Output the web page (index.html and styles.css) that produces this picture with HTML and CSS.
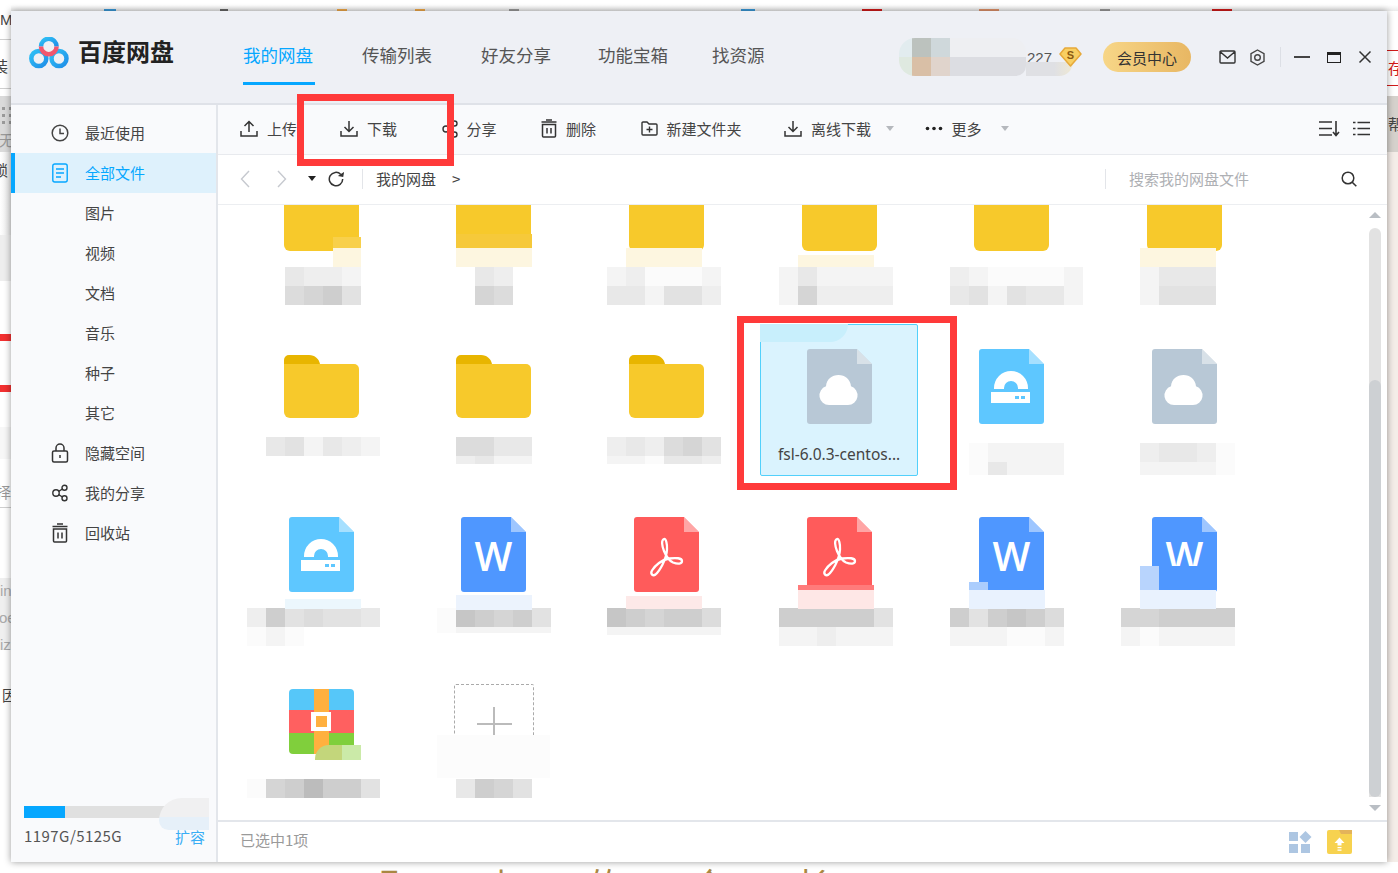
FILE: index.html
```html
<!DOCTYPE html>
<html lang="zh-CN">
<head>
    <meta charset="UTF-8">
    <title>百度网盘</title>
    <link rel="stylesheet" href="styles.css">
</head>
<body>
    <svg class="defs" width="0" height="0">
        <symbol id="file-shape" viewBox="0 0 65 75">
            <path d="M3 0H50L65 15V72a3 3 0 0 1-3 3H3a3 3 0 0 1-3-3V3a3 3 0 0 1 3-3z" fill="currentColor"/>
            <path d="M50 0L65 15H50z" fill="#fff" opacity=".45"/>
        </symbol>
        <symbol id="folder" viewBox="0 0 75 63">
            <path d="M0 12V5a5 5 0 0 1 5-5h20c6 0 10 4 11 9v6H0z" fill="#e8b500"/>
            <path d="M0 9h70a5 5 0 0 1 5 5v43a6 6 0 0 1-6 6H6a6 6 0 0 1-6-6z" fill="#f7c92b"/>
        </symbol>
        <symbol id="cloud-file" viewBox="0 0 65 75">
            <use href="#file-shape" color="#b8c8d6"/>
            <path d="M22 56a9.6 9.6 0 0 1-3-18.7C19.5 30 25 26 31.500 26s12 4.500 12.500 11.300A9.600 9.600 0 0 1 41 56z" fill="#fff"/>
        </symbol>
        <symbol id="disc-file" viewBox="0 0 65 75">
            <use href="#file-shape" color="#5ec7ff"/>
            <path d="M15 40v-1a17 17 0 0 1 34 0v1H39v-1a7 7 0 0 0-14 0v1z" fill="#fff"/>
            <path d="M12 43h39v11H12z" fill="#fff"/>
            <path d="M36 47h4v3h-4zM42 47h4v3h-4z" fill="#5ec7ff"/>
        </symbol>
        <symbol id="word-file" viewBox="0 0 65 75">
            <use href="#file-shape" color="#4f97ff"/>
            <text x="32.500" y="54" text-anchor="middle" class="word-w">W</text>
        </symbol>
        <symbol id="pdf-file" viewBox="0 0 65 75">
            <use href="#file-shape" color="#ff5b5b"/>
            <path d="M30 22c-3 1-2 7 0 12 2 5 6 10 9 11.500 5 2 9 1.500 9-1.500 0-3-6-3.500-13-2.500-7 1-14 7-17 12-2 3.500 1 6 3.500 4 4-3.500 11-15 11.500-25 .3-5.500-1-11-3-10.500z" fill="none" stroke="#fff" stroke-width="2.300"/>
        </symbol>
    </svg>

    <!-- whatever is open behind the window -->
    <div class="desktop">
        <div class="edge edge-top">
            <i class="tick tk1"></i><i class="tick tk2"></i><i class="tick tk3"></i><i class="tick tk4"></i><i class="tick tk5"></i>
            <i class="tick tk6"></i><i class="tick tk7"></i><i class="tick tk8"></i><i class="tick tk9"></i><i class="tick tk10"></i>
        </div>
        <div class="edge edge-left">
            <i class="lb lb1"></i><i class="lb lb2"></i><i class="lb lb3"></i><i class="lb lb4"></i><i class="lb lb5"></i>
            <i class="lb lb6"></i><i class="lb lb7"></i><i class="lb lb8"></i><i class="lb lb9"></i><i class="lb lb10"></i>
            <span class="scrap s-m">M</span><span class="scrap s-zhuang">装</span><span class="scrap s-wu">无</span>
            <span class="scrap s-suo">锁</span><span class="scrap s-ze">择</span><span class="scrap s-in">in</span>
            <span class="scrap s-oe">oe</span><span class="scrap s-iz">iz</span><span class="scrap s-yin">因</span>
        </div>
        <div class="edge edge-right">
            <i class="rb rb1"></i><i class="rb rb2"></i><i class="rb rb3"></i>
            <span class="scrap s-cun">存</span><span class="scrap s-bang">帮</span>
        </div>
        <div class="edge-bottom">
            <span>取</span><span>小</span><span>的</span><span>合</span><span>长</span>
        </div>
    </div>

    <div class="window">
        <header class="topbar">
            <svg class="logo" width="40" height="32" viewBox="0 0 40 32">
                <defs>
                    <linearGradient id="logo-blue" x1="0" y1="0" x2="1" y2="1">
                        <stop offset="0" stop-color="#2fc0f5"/>
                        <stop offset="1" stop-color="#1f8fe8"/>
                    </linearGradient>
                </defs>
                <circle cx="9.800" cy="21.500" r="7.500" fill="none" stroke="url(#logo-blue)" stroke-width="4.500"/>
                <circle cx="30" cy="21.500" r="7.500" fill="none" stroke="url(#logo-blue)" stroke-width="4.500"/>
                <path d="M12 9.500a7.800 7.800 0 0 1 15.600 0" fill="none" stroke="url(#logo-blue)" stroke-width="4.500"/>
                <path d="M12 9.500c0 4 3.500 7.800 7.800 7.800s7.800-3.800 7.800-7.800" fill="none" stroke="#f2566e" stroke-width="4.500"/>
            </svg>
            <div class="brand">百度网盘</div>
            <nav class="tabs">
                <a class="tab active">我的网盘</a>
                <a class="tab">传输列表</a>
                <a class="tab">好友分享</a>
                <a class="tab">功能宝箱</a>
                <a class="tab">找资源</a>
            </nav>
            <div class="user">
                <div class="avatar-blur">
                    <i class="ab1"></i><i class="ab2"></i><i class="ab3"></i><i class="ab4"></i><i class="ab4"></i><i class="ab4"></i><i class="ab4"></i>
                    <i class="ab5"></i><i class="ab6"></i><i class="ab7"></i><i class="ab8"></i><i class="ab8"></i><i class="ab8"></i><i class="ab8"></i>
                </div>
                <span class="user-num">227</span>
                <i class="avatar-tail"></i>
                <svg width="23" height="20" viewBox="0 0 23 20">
                    <path d="M6 1h11l5 6-10.500 12L1 7z" fill="#f8cf62" stroke="#e6a93a" stroke-width="1.500" stroke-linejoin="round"/>
                    <text x="11.500" y="12" text-anchor="middle" class="vip-s">S</text>
                </svg>
            </div>
            <a class="vip-btn">会员中心</a>
            <svg class="win-icon mail" width="17" height="14" viewBox="0 0 17 14">
                <path d="M2 1h13a1 1 0 0 1 1 1v10a1 1 0 0 1-1 1H2a1 1 0 0 1-1-1V2a1 1 0 0 1 1-1zM1.500 2l7 6 7-6" fill="none" stroke="#333" stroke-width="1.400"/>
            </svg>
            <svg class="win-icon gear" width="17" height="17" viewBox="0 0 17 17">
                <path d="M8.500 1l6.500 3.700v7.600L8.500 16 2 12.300V4.700z" fill="none" stroke="#444" stroke-width="1.400"/>
                <circle cx="8.500" cy="8.500" r="2.800" fill="none" stroke="#444" stroke-width="1.400"/>
            </svg>
            <i class="win-sep"></i>
            <i class="win-min"></i>
            <i class="win-max"></i>
            <svg class="win-close" width="14" height="14" viewBox="0 0 14 14">
                <path d="M1.500 1.500l11 11M12.500 1.500l-11 11" stroke="#333" stroke-width="1.500"/>
            </svg>
        </header>

        <div class="body">
            <aside class="sidebar">
                <ul class="nav">
                    <li class="nav-item">
                        <svg class="nav-icon" width="18" height="18" viewBox="0 0 18 18">
                            <circle cx="9" cy="9" r="7.800" fill="none" stroke="#444" stroke-width="1.500"/>
                            <path d="M9 4.500V9.500H13" fill="none" stroke="#444" stroke-width="1.500"/>
                        </svg>
                        最近使用
                    </li>
                    <li class="nav-item active">
                        <svg class="nav-icon" width="18" height="20" viewBox="0 0 18 20">
                            <rect x="1.800" y="1" width="14.400" height="18" rx="2" fill="none" stroke="#06a7ff" stroke-width="1.400"/>
                            <path d="M5 6h8M5 10h8M5 14h5" stroke="#06a7ff" stroke-width="1.300"/>
                        </svg>
                        全部文件
                    </li>
                    <li class="nav-item sub">图片</li>
                    <li class="nav-item sub">视频</li>
                    <li class="nav-item sub">文档</li>
                    <li class="nav-item sub">音乐</li>
                    <li class="nav-item sub">种子</li>
                    <li class="nav-item sub">其它</li>
                    <li class="nav-item">
                        <svg class="nav-icon" width="18" height="20" viewBox="0 0 18 20">
                            <rect x="1.500" y="8" width="15" height="11" rx="1.500" fill="none" stroke="#333" stroke-width="1.500"/>
                            <path d="M5 8V5a4 4 0 0 1 8 0v3" fill="none" stroke="#333" stroke-width="1.500"/>
                            <path d="M9 12v3" stroke="#333" stroke-width="1.500"/>
                        </svg>
                        隐藏空间
                    </li>
                    <li class="nav-item">
                        <svg class="nav-icon" width="18" height="18" viewBox="0 0 18 18">
                            <circle cx="5" cy="9" r="3.200" fill="none" stroke="#333" stroke-width="1.400"/>
                            <circle cx="13.500" cy="3.700" r="2.500" fill="none" stroke="#333" stroke-width="1.400"/>
                            <circle cx="13.500" cy="14.300" r="2.500" fill="none" stroke="#333" stroke-width="1.400"/>
                            <path d="M7.700 7.300l3.700-2.300M7.700 10.700l3.700 2.300" stroke="#333" stroke-width="1.400"/>
                        </svg>
                        我的分享
                    </li>
                    <li class="nav-item">
                        <svg class="nav-icon" width="18" height="20" viewBox="0 0 18 20">
                            <path d="M2.500 6h13v12a1 1 0 0 1-1 1h-11a1 1 0 0 1-1-1zM1.500 3.500h15M6 1h6" fill="none" stroke="#333" stroke-width="1.500"/>
                            <path d="M7 9.500v6M11 9.500v6" stroke="#333" stroke-width="1.500"/>
                        </svg>
                        回收站
                    </li>
                </ul>
                <div class="quota">
                    <div class="quota-bar"><i class="quota-used"></i></div>
                    <div class="quota-text"><span class="quota-num">1197G/5125G</span><a class="quota-more">扩容</a></div>
                </div>
                <i class="quota-blur"></i>
            </aside>

            <main class="content">
                <div class="toolbar">
                    <a class="tool upload">
                        <svg width="18" height="17" viewBox="0 0 18 17"><path d="M1 11v5h16v-5M9 12V1.500M4.500 6L9 1.500 13.500 6" fill="none" stroke="#333" stroke-width="1.500"/></svg>
                        上传
                    </a>
                    <a class="tool">
                        <svg width="18" height="17" viewBox="0 0 18 17"><path d="M1 11v5h16v-5M9 1v10.500M4.500 7L9 11.500 13.500 7" fill="none" stroke="#333" stroke-width="1.500"/></svg>
                        下载
                    </a>
                    <a class="tool">
                        <svg width="16" height="18" viewBox="0 0 16 18"><circle cx="4" cy="9" r="3" fill="none" stroke="#333" stroke-width="1.400"/><circle cx="12.500" cy="3.500" r="2.500" fill="none" stroke="#333" stroke-width="1.400"/><circle cx="12.500" cy="14.500" r="2.500" fill="none" stroke="#333" stroke-width="1.400"/><path d="M6.500 7.300l4-2.500M6.500 10.700l4 2.500" stroke="#333" stroke-width="1.400"/></svg>
                        分享
                    </a>
                    <a class="tool">
                        <svg width="16" height="19" viewBox="0 0 16 19"><path d="M1.500 5.500h13V17a1 1 0 0 1-1 1h-11a1 1 0 0 1-1-1zM.5 3h15M5 1h6" fill="none" stroke="#333" stroke-width="1.500"/><path d="M6 9v5.500M10 9v5.500" stroke="#333" stroke-width="1.500"/></svg>
                        删除
                    </a>
                    <a class="tool new-folder">
                        <svg width="17" height="15" viewBox="0 0 17 15"><path d="M1 3V2a1 1 0 0 1 1-1h4l2 2h7a1 1 0 0 1 1 1v9a1 1 0 0 1-1 1H2a1 1 0 0 1-1-1z" fill="none" stroke="#333" stroke-width="1.400"/><path d="M8.500 5.500v6M5.500 8.500h6" stroke="#333" stroke-width="1.400"/></svg>
                        新建文件夹
                    </a>
                    <a class="tool has-caret">
                        <svg width="18" height="17" viewBox="0 0 18 17"><path d="M1 11v5h16v-5M9 1v10.500M4.500 7L9 11.500 13.500 7" fill="none" stroke="#333" stroke-width="1.500"/></svg>
                        离线下载
                        <i class="caret"></i>
                    </a>
                    <a class="tool more">
                        <svg width="18" height="17" viewBox="0 0 18 17"><circle cx="2.500" cy="8.500" r="1.800" fill="#222"/><circle cx="9" cy="8.500" r="1.800" fill="#222"/><circle cx="15.500" cy="8.500" r="1.800" fill="#222"/></svg>
                        更多
                        <i class="caret"></i>
                    </a>
                    <div class="view-tools">
                        <svg width="21" height="17" viewBox="0 0 21 17"><path d="M0 2h13M0 8.500h13M0 15h13" stroke="#333" stroke-width="1.400"/><path d="M17 1v14M14 12l3 3.500 3-3.500" fill="none" stroke="#333" stroke-width="1.600"/></svg>
                        <svg width="17" height="15" viewBox="0 0 17 15"><path d="M4.500 1.500H17M4.500 7.500H17M4.500 13.500H17" stroke="#333" stroke-width="1.300"/><path d="M0 1.500h2.500M0 7.500h2.500M0 13.500h2.500" stroke="#333" stroke-width="1.300"/></svg>
                    </div>
                </div>

                <div class="pathbar">
                    <svg class="back" width="10" height="18" viewBox="0 0 10 18"><path d="M9 1L1.500 9 9 17" fill="none" stroke="#c6c9cf" stroke-width="1.400"/></svg>
                    <svg class="forward" width="10" height="18" viewBox="0 0 10 18"><path d="M1 1l7.500 8L1 17" fill="none" stroke="#c6c9cf" stroke-width="1.400"/></svg>
                    <i class="drop"></i>
                    <svg class="refresh" width="16" height="16" viewBox="0 0 16 16"><path d="M12.800 3.400A6.700 6.700 0 1 0 14.700 8" fill="none" stroke="#333" stroke-width="1.500"/><path d="M10.200 5.500h5.500V.5z" fill="#333" transform="rotate(10 13 3)"/></svg>
                    <i class="path-sep"></i>
                    <span class="crumb">我的网盘</span>
                    <span class="crumb-arrow">&gt;</span>
                    <div class="search">
                        <span>搜索我的网盘文件</span>
                        <svg width="16" height="16" viewBox="0 0 16 16"><circle cx="7" cy="7" r="5.800" fill="none" stroke="#333" stroke-width="1.500"/><path d="M11 11l4.300 4.300" stroke="#333" stroke-width="1.600"/></svg>
                    </div>
                </div>

                <div class="listing">
                    <div class="files">
                        <!-- row 1 is scrolled under the path bar -->
                        <div class="tile">
                            <div class="thumb"><svg width="75" height="63"><use href="#folder"/></svg></div>
                            <div class="name w4 r1 x43"><i class="s3"></i><i class="s2"></i><i class="s2"></i><i class="s1"></i><i class="s5"></i><i class="s6"></i><i class="s7"></i><i class="s4"></i></div>
                            <i class="tint t1"></i>
                        </div>
                        <div class="tile">
                            <div class="thumb"><svg width="75" height="63"><use href="#folder"/></svg></div>
                            <div class="name w2 r1 x60"><i class="s3"></i><i class="s2"></i><i class="s6"></i><i class="s5"></i></div>
                            <i class="tint t2"></i>
                        </div>
                        <div class="tile">
                            <div class="thumb"><svg width="75" height="63"><use href="#folder"/></svg></div>
                            <div class="name w6 r1 x20"><i class="s1"></i><i class="s2"></i><i class="s0"></i><i class="s0"></i><i class="s0"></i><i class="s1"></i><i class="s3"></i><i class="s3"></i><i class="s1"></i><i class="s4"></i><i class="s4"></i><i class="s2"></i></div>
                            <i class="tint t3"></i>
                        </div>
                        <div class="tile">
                            <div class="thumb"><svg width="75" height="63"><use href="#folder"/></svg></div>
                            <div class="name w6 r1 x19"><i class="s1"></i><i class="s3"></i><i class="s1"></i><i class="s1"></i><i class="s1"></i><i class="s1"></i><i class="s1"></i><i class="s6"></i><i class="s2"></i><i class="s2"></i><i class="s2"></i><i class="s2"></i></div>
                            <i class="tint t4"></i>
                        </div>
                        <div class="tile">
                            <div class="thumb"><svg width="75" height="63"><use href="#folder"/></svg></div>
                            <div class="name w7 r1 x17"><i class="s2"></i><i class="s1"></i><i class="s0"></i><i class="s0"></i><i class="s0"></i><i class="s0"></i><i class="s1"></i><i class="s3"></i><i class="s4"></i><i class="s1"></i><i class="s4"></i><i class="s3"></i><i class="s3"></i><i class="s1"></i></div>
                        </div>
                        <div class="tile">
                            <div class="thumb"><svg width="75" height="63"><use href="#folder"/></svg></div>
                            <div class="name w4 r1 x35"><i class="s1"></i><i class="s3"></i><i class="s3"></i><i class="s3"></i><i class="s1"></i><i class="s4"></i><i class="s4"></i><i class="s4"></i></div>
                            <i class="tint t5"></i>
                        </div>

                        <div class="tile">
                            <div class="thumb"><svg width="75" height="63"><use href="#folder"/></svg></div>
                            <div class="name w6 r2 x24"><i class="s3"></i><i class="s4"></i><i class="s1"></i><i class="s3"></i><i class="s2"></i><i class="s1"></i></div>
                        </div>
                        <div class="tile">
                            <div class="thumb"><svg width="75" height="63"><use href="#folder"/></svg></div>
                            <div class="name w4 r2 x41 tail8"><i class="s5"></i><i class="s5"></i><i class="s3"></i><i class="s3"></i><i class="s2"></i><i class="s3"></i><i class="s1"></i><i class="s1"></i></div>
                        </div>
                        <div class="tile">
                            <div class="thumb"><svg width="75" height="63"><use href="#folder"/></svg></div>
                            <div class="name w6 r2 x20 tail8"><i class="s2"></i><i class="s3"></i><i class="s2"></i><i class="s5"></i><i class="s6"></i><i class="s4"></i><i class="s1"></i><i class="s1"></i><i class="s0"></i><i class="s3"></i><i class="s3"></i><i class="s2"></i></div>
                        </div>
                        <div class="tile selected">
                            <i class="select-tint"></i>
                            <div class="thumb"><svg width="65" height="75"><use href="#cloud-file"/></svg></div>
                            <div class="file-name">fsl-6.0.3-centos...</div>
                        </div>
                        <div class="tile">
                            <div class="thumb"><svg width="65" height="75"><use href="#disc-file"/></svg></div>
                            <div class="name w5 r2b x36 tail13"><i class="s0"></i><i class="s1"></i><i class="s1"></i><i class="s1"></i><i class="s1"></i><i class="s0"></i><i class="s3"></i><i class="s1"></i><i class="s1"></i><i class="s1"></i></div>
                        </div>
                        <div class="tile">
                            <div class="thumb"><svg width="65" height="75"><use href="#cloud-file"/></svg></div>
                            <div class="name w5 r2b x35 tail13"><i class="s2"></i><i class="s3"></i><i class="s3"></i><i class="s2"></i><i class="s0"></i><i class="s1"></i><i class="s1"></i><i class="s1"></i><i class="s1"></i><i class="s0"></i></div>
                        </div>

                        <div class="tile">
                            <div class="thumb"><svg width="65" height="75"><use href="#disc-file"/></svg></div>
                            <div class="name w7 r3 x5"><i class="s2"></i><i class="s7"></i><i class="s4"></i><i class="s5"></i><i class="s4"></i><i class="s4"></i><i class="s3"></i><i class="s0"></i><i class="s1"></i><i class="s0"></i><i class="s9w"></i><i class="s9w"></i><i class="s9w"></i><i class="s9w"></i></div>
                            <i class="tint t6"></i>
                        </div>
                        <div class="tile">
                            <div class="thumb"><svg width="65" height="75"><use href="#word-file"/></svg></div>
                            <div class="name w6 r3 x22 tail6"><i class="s0"></i><i class="s8"></i><i class="s7"></i><i class="s6"></i><i class="s7"></i><i class="s4"></i><i class="s0"></i><i class="s1"></i><i class="s1"></i><i class="s1"></i><i class="s1"></i><i class="s1"></i></div>
                            <i class="tint t7"></i>
                        </div>
                        <div class="tile">
                            <div class="thumb"><svg width="65" height="75"><use href="#pdf-file"/></svg></div>
                            <div class="name w6 r3 x20 tail8"><i class="s8"></i><i class="s7"></i><i class="s6"></i><i class="s7"></i><i class="s7"></i><i class="s5"></i><i class="s1"></i><i class="s1"></i><i class="s1"></i><i class="s1"></i><i class="s1"></i><i class="s1"></i></div>
                            <i class="tint t8"></i>
                        </div>
                        <div class="tile">
                            <div class="thumb"><svg width="65" height="75"><use href="#pdf-file"/></svg></div>
                            <div class="name w6 r3 x19"><i class="s7"></i><i class="s7"></i><i class="s7"></i><i class="s7"></i><i class="s7"></i><i class="s4"></i><i class="s1"></i><i class="s1"></i><i class="s2"></i><i class="s1"></i><i class="s1"></i><i class="s1"></i></div>
                            <i class="tint t9"></i>
                        </div>
                        <div class="tile">
                            <div class="thumb"><svg width="65" height="75"><use href="#word-file"/></svg></div>
                            <div class="name w6 r3 x17"><i class="s7"></i><i class="s4"></i><i class="s7"></i><i class="s8"></i><i class="s7"></i><i class="s5"></i><i class="s1"></i><i class="s1"></i><i class="s1"></i><i class="s0"></i><i class="s0"></i><i class="s1"></i></div>
                            <i class="tint t10"></i>
                        </div>
                        <div class="tile">
                            <div class="thumb"><svg width="65" height="75"><use href="#word-file"/></svg></div>
                            <div class="name w6 r3 x16"><i class="s6"></i><i class="s6"></i><i class="s7"></i><i class="s7"></i><i class="s7"></i><i class="s7"></i><i class="s1"></i><i class="s0"></i><i class="s1"></i><i class="s1"></i><i class="s1"></i><i class="s1"></i></div>
                            <i class="tint t11"></i>
                        </div>

                        <div class="tile">
                            <div class="thumb">
                                <svg width="65" height="65" viewBox="0 0 65 65">
                                    <clipPath id="zip-round"><rect width="65" height="65" rx="4"/></clipPath>
                                    <g clip-path="url(#zip-round)">
                                        <rect width="65" height="21" fill="#56c7f9"/>
                                        <rect y="21" width="65" height="23" fill="#ff6060"/>
                                        <rect y="44" width="65" height="21" fill="#80cf3c"/>
                                        <rect x="25" width="15" height="65" fill="#ffb03f"/>
                                        <rect x="22" y="23" width="20" height="19" fill="#fff"/>
                                        <rect x="27" y="27" width="11" height="11" fill="#ffb03f"/>
                                    </g>
                                </svg>
                            </div>
                            <div class="name w7 r4 x5"><i class="s0"></i><i class="s6"></i><i class="s7"></i><i class="s9"></i><i class="s7"></i><i class="s7"></i><i class="s4"></i></div>
                            <i class="tint t12"></i>
                        </div>
                        <div class="tile">
                            <div class="thumb">
                                <div class="add-box"><i class="plus-h"></i><i class="plus-v"></i></div>
                            </div>
                            <div class="name w4 r4 x41"><i class="s3"></i><i class="s7"></i><i class="s6"></i><i class="s4"></i></div>
                            <i class="tint t13"></i>
                        </div>
                    </div>
                    <div class="scroller">
                        <i class="arrow-up"></i>
                        <div class="track"><i class="thumb-bar"></i></div>
                        <i class="arrow-down"></i>
                    </div>
                </div>

                <footer class="status">
                    <span class="status-text">已选中1项</span>
                    <div class="status-icons">
                        <svg width="23" height="22" viewBox="0 0 23 22"><path d="M0 1h9v9H0zM0 13h9v9H0zM12 13h9v9h-9z" fill="#adc6e2"/><path d="M16.500 0l6 6-6 6-6-6z" fill="#adc6e2"/></svg>
                        <svg width="25" height="24" viewBox="0 0 25 24">
                            <rect width="25" height="24" rx="2" fill="#f7d24f"/>
                            <path d="M12 0h13v4H14z" fill="#e3b35a"/>
                            <path d="M12.500 7.500l5 5.500h-3v2.500h-4V13h-3zM10.500 17h4v1.200h-4zM10.500 19.500h4v1.200h-4z" fill="#fff"/>
                        </svg>
                    </div>
                </footer>
            </main>
        </div>
    </div>

    <!-- red marks drawn on top of the screenshot -->
    <div class="mark mark-download"></div>
    <div class="mark mark-file"></div>
</body>
</html>
```

FILE: styles.css
```css
* {
    box-sizing: border-box;
}

body {
    margin: 0;
    width: 1398px;
    height: 873px;
    overflow: hidden;
    position: relative;
    background-color: #fff;
    font-family: "Noto Sans CJK SC", "Noto Sans", sans-serif;
    font-size: 15px;
    color: #444;
}

i {
    display: block;
    font-style: normal;
}

.defs {
    position: absolute;
}

.word-w {
    font-family: "Open Sans", sans-serif;
    font-weight: 600;
    font-size: 40px;
    fill: #fff;
}

.vip-s {
    font-family: "Liberation Sans", sans-serif;
    font-weight: 700;
    font-size: 11px;
    fill: #8a5a12;
}

/* behind the window */
.desktop {
    position: absolute;
    inset: 0;
}

.edge {
    position: absolute;
    overflow: hidden;
}

.edge-top {
    left: 0;
    top: 0;
    width: 1398px;
    height: 11px;
    background: linear-gradient(#fff 0 5px, #ebebeb);
}

.tick {
    position: absolute;
    top: 9px;
    height: 2px;
    width: 20px;
}

.tk1 { left: 104px; width: 12px; background: #3a9ad9; }
.tk2 { left: 220px; width: 8px; background: #666; }
.tk3 { left: 337px; width: 10px; background: #f0a848; }
.tk4 { left: 415px; width: 10px; background: #f0a848; }
.tk5 { left: 509px; width: 10px; background: #999; }
.tk6 { left: 741px; width: 14px; background: #3a9ad9; }
.tk7 { left: 862px; background: #d11a1a; }
.tk8 { left: 979px; background: #e0926a; }
.tk9 { left: 1100px; width: 10px; background: #999; }
.tk10 { left: 1212px; background: #d11a1a; }

.edge-left {
    left: 0;
    top: 0;
    width: 11px;
    height: 873px;
    background-color: #fff;
}

.lb {
    position: absolute;
    left: 0;
    width: 11px;
    height: 1px;
    background-color: #cfcfcf;
}

.lb1 { top: 39px; }
.lb2 { top: 88px; }
.lb3 {
    top: 96px;
    height: 56px;
    background:
        radial-gradient(circle, #9a9a9a 0 2px, transparent 2px) 0 9px / 7px 7px repeat-x,
        radial-gradient(circle, #9a9a9a 0 2px, transparent 2px) 0 16px / 7px 7px repeat-x,
        radial-gradient(circle, #9a9a9a 0 2px, transparent 2px) 0 23px / 7px 7px repeat-x,
        #dadada;
}
.lb4 { top: 152px; height: 84px; background: linear-gradient(90deg, #fff, #e4e4e4); }
.lb5 { top: 235px; height: 46px; background-color: #eeeeee; }
.lb6 { top: 334px; height: 7px; background-color: #f23030; }
.lb7 { top: 385px; height: 7px; background-color: #f23030; }
.lb8 { top: 427px; height: 32px; background-color: #f7f7f7; }
.lb9 { top: 507px; }
.lb10 { top: 578px; height: 72px; background-color: #efefef; }

.scrap {
    position: absolute;
    font-size: 15px;
    line-height: 20px;
    color: #444;
}

.s-m { left: 0; top: 10px; font-family: "Liberation Sans", sans-serif; }
.s-zhuang { left: -7px; top: 56px; }
.s-wu { left: -1px; top: 130px; color: #999; }
.s-suo { left: -7px; top: 160px; }
.s-ze { left: -4px; top: 482px; color: #999; }
.s-in { left: 0; top: 581px; color: #aaa; font-family: "Liberation Sans", sans-serif; }
.s-oe { left: -1px; top: 608px; color: #aaa; font-family: "Liberation Sans", sans-serif; }
.s-iz { left: 0; top: 635px; color: #aaa; font-family: "Liberation Sans", sans-serif; }
.s-yin { left: 2px; top: 685px; }

.edge-right {
    left: 1387px;
    top: 11px;
    width: 11px;
    height: 851px;
    background: linear-gradient(#fff 0 85px, #f4ede8 85px);
}

.rb {
    position: absolute;
    left: 0;
    width: 11px;
    height: 1px;
    background-color: #d11a1a;
}

.rb1 { top: 39px; }
.rb2 { top: 74px; }
.rb3 { top: 85px; height: 56px; background-color: #d5d1cc; }

.s-cun { left: 1px; top: 47px; color: #d11a1a; }
.s-bang { left: 1px; top: 103px; }

.edge-bottom {
    position: absolute;
    left: 380px;
    top: 862px;
    display: flex;
    gap: 70px;
    font-size: 34px;
    line-height: 40px;
    color: #a98742;
    padding-top: 2px;
}

/* window */
.window {
    position: absolute;
    left: 11px;
    top: 11px;
    width: 1376px;
    height: 851px;
    display: flex;
    flex-direction: column;
    background-color: #fff;
    box-shadow: 0 0 7px rgba(0, 0, 0, 0.4);
}

.topbar {
    height: 94px;
    flex: none;
    display: flex;
    align-items: center;
    padding: 0 15px 0 18px;
    background-color: #eef0f5;
    border-bottom: 2px solid #dfe2e8;
}

.logo {
    flex: none;
    margin-top: -8px;
}

.brand {
    margin-left: 9px;
    margin-top: -12px;
    font-size: 24px;
    font-weight: 700;
    line-height: 30px;
    color: #222;
}

.tabs {
    display: flex;
    gap: 49px;
    margin-left: 69px;
    align-self: flex-start;
}

.tab {
    height: 74px;
    padding-top: 30px;
    font-size: 17.5px;
    line-height: 28px;
    color: #555;
}

.tab:nth-child(3) { margin-right: -2px; }
.tab:nth-child(4) { margin-right: -5px; }

.tab.active {
    color: #06a7ff;
    border-bottom: 3px solid #06a7ff;
    width: 72px;
    margin-right: -2px;
}

.user {
    position: relative;
    margin-left: auto;
    width: 183px;
    height: 38px;
    display: flex;
    align-items: center;
    justify-content: flex-end;
    gap: 8px;
}

.avatar-blur {
    position: absolute;
    left: 0;
    top: 0;
    display: grid;
    grid-template-columns: 13px 19px 19px repeat(4, 19px);
    grid-auto-rows: 19px;
    border-radius: 16px 14px 10px 16px;
    overflow: hidden;
}

.ab1 { background-color: #e2ecef; }
.ab2 { background-color: #bcc2be; }
.ab3 { background-color: #cfd8db; }
.ab4 { background-color: #eeeff2; }
.ab5 { background-color: #dfe9e0; }
.ab6 { background-color: #d9bfa6; }
.ab7 { background-color: #e0d4cc; }
.ab8 { background-color: #dcdde2; }

.avatar-tail {
    position: absolute;
    left: 127px;
    top: 24px;
    width: 47px;
    height: 14px;
    background: linear-gradient(90deg, #dfe0e4 60%, #efe9d4);
    border-radius: 0 0 14px 0;
}

.user-num {
    position: relative;
    font-size: 15px;
    line-height: 20px;
    color: #555;
    font-family: "Liberation Sans", sans-serif;
    margin-top: 1px;
    margin-right: -1px;
}

.user svg {
    position: relative;
}

.vip-btn {
    margin-left: 21px;
    width: 88px;
    height: 30px;
    border-radius: 15px;
    background: linear-gradient(90deg, #f7d687, #e8b763);
    text-align: center;
    font-size: 15px;
    line-height: 31px;
    color: #333;
}

.win-icon {
    flex: none;
}

.mail {
    margin-left: 28px;
}

.gear {
    margin-left: 13px;
}

.win-sep {
    width: 1px;
    height: 20px;
    margin-left: 14px;
    background-color: #dcdfe5;
}

.win-min {
    width: 16px;
    height: 2px;
    margin-left: 13px;
    background-color: #444;
}

.win-max {
    width: 14px;
    height: 11px;
    margin-left: 17px;
    border: 1.500px solid #222;
    border-top-width: 3px;
}

.win-close {
    margin-left: 17px;
}

.body {
    flex: 1;
    display: flex;
    min-height: 0;
}

/* sidebar */
.sidebar {
    position: relative;
    width: 207px;
    flex: none;
    display: flex;
    flex-direction: column;
    background-color: #f9fafc;
    border-right: 2px solid #e3e6eb;
}

.nav {
    list-style: none;
    margin: 0;
    padding: 8px 0 0;
}

.nav-item {
    height: 40px;
    display: flex;
    align-items: center;
    gap: 16px;
    padding-left: 40px;
    line-height: 40px;
    color: #444;
}

.nav-item.sub {
    padding-left: 74px;
}

.nav-item.active {
    color: #06a7ff;
    background-color: #def1fc;
    box-shadow: inset 4px 0 0 #06a7ff;
}

.nav-icon {
    flex: none;
}

.quota {
    margin-top: auto;
    padding: 0 11px 13px 13px;
}

.quota-bar {
    height: 12px;
    background-color: #e0e0e0;
}

.quota-used {
    width: 41px;
    height: 12px;
    background-color: #06a7ff;
}

.quota-text {
    display: flex;
    justify-content: space-between;
    margin-top: 7px;
    line-height: 24px;
    color: #555;
}

.quota-num {
    margin-top: -1px;
    letter-spacing: 0.45px;
}

.quota-more {
    color: #3aaef5;
}

.quota-blur {
    position: absolute;
    left: 148px;
    top: 693px;
    width: 50px;
    height: 32px;
    border-radius: 24px 0 0 10px;
    background: linear-gradient(#f0f0f1 0 19px, #e6f0f9 19px);
}

/* right side */
.content {
    flex: 1;
    min-width: 0;
    display: flex;
    flex-direction: column;
}

.toolbar {
    height: 50px;
    flex: none;
    display: flex;
    align-items: center;
    gap: 44.5px;
    padding: 0 17px 2px 22px;
    background-color: #f9fafc;
    border-bottom: 1px solid #e8eaee;
}

.tool {
    display: flex;
    align-items: center;
    gap: 9px;
    line-height: 20px;
    color: #444;
}

.tool.upload {
    margin-right: -1.5px;
}

.tool.new-folder {
    margin-right: -2px;
}

.tool.has-caret {
    margin-right: -14px;
}

.tool svg {
    flex: none;
}

.caret {
    width: 0;
    height: 0;
    margin-left: 6px;
    border: 4px solid transparent;
    border-top: 5px solid #b5b8bd;
    border-bottom: 0;
}

.tool.more .caret {
    margin-left: 10px;
}

.view-tools {
    margin-left: auto;
    display: flex;
    align-items: center;
    gap: 13px;
}

.pathbar {
    height: 50px;
    flex: none;
    display: flex;
    align-items: center;
    padding: 0 0 2px 22px;
    border-bottom: 1px solid #eceef1;
}

.forward {
    margin-left: 27px;
}

.drop {
    margin-left: 21px;
    width: 0;
    height: 0;
    border: 4px solid transparent;
    border-top: 5px solid #222;
    border-bottom: 0;
}

.refresh {
    margin-left: 12px;
}

.path-sep {
    width: 1px;
    height: 20px;
    margin-left: 18px;
    background-color: #e3e5e9;
}

.crumb {
    margin-left: 13px;
    line-height: 20px;
}

.crumb-arrow {
    margin-left: 16px;
    line-height: 20px;
}

.search {
    margin-left: auto;
    width: 282px;
    height: 20px;
    display: flex;
    align-items: center;
    justify-content: space-between;
    padding: 0 30px 0 23px;
    border-left: 1px solid #e3e5e9;
    line-height: 20px;
    color: #aeb0b4;
}

/* file grid */
.listing {
    flex: 1;
    min-height: 0;
    display: flex;
    overflow: hidden;
}

.files {
    flex: 1;
    min-width: 0;
    display: grid;
    grid-template-columns: repeat(6, 172.6px);
    grid-auto-rows: 167.5px;
    justify-content: start;
    padding-left: 17px;
    margin-top: -48.5px;
}

.tile {
    position: relative;
    width: 158px;
    height: 152px;
    justify-self: center;
    display: flex;
    flex-direction: column;
    align-items: flex-start;
    padding-top: 24px;
    border: 1px solid transparent;
    border-radius: 2px;
}

.tile.selected {
    background-color: #daf3fe;
    border-color: #52d0fb;
}

.select-tint {
    position: absolute;
    left: -1px;
    top: -1px;
    width: 88px;
    height: 18px;
    background-color: #c8effc;
    border-radius: 0 0 70px 0;
}

.thumb {
    position: relative;
    width: 100%;
    height: 75px;
    flex: none;
    display: flex;
    align-items: center;
    justify-content: center;
}

.file-name {
    width: 100%;
    margin-top: 18px;
    text-align: center;
    font-family: "Noto Sans", sans-serif;
    font-size: 15.5px;
    line-height: 24px;
    color: #444;
}

.add-box {
    position: relative;
    width: 80px;
    height: 80px;
    margin-top: 5px;
    border: 1px dashed #aaa;
    border-radius: 2px;
    flex: none;
}

.plus-h {
    position: absolute;
    left: 22px;
    top: 38px;
    width: 35px;
    height: 2px;
    background-color: #bbb;
}

.plus-v {
    position: absolute;
    left: 38px;
    top: 22px;
    width: 2px;
    height: 35px;
    background-color: #bbb;
}

/* pixelated names */
.name {
    position: relative;
    z-index: 1;
    display: grid;
    grid-auto-rows: 19px;
    flex: none;
}

.w2 { grid-template-columns: repeat(2, 19px); }
.w4 { grid-template-columns: repeat(4, 19px); }
.w5 { grid-template-columns: repeat(5, 19px); }
.w6 { grid-template-columns: repeat(6, 19px); }
.w7 { grid-template-columns: repeat(7, 19px); }

.tail6 { grid-template-rows: 19px 6px; }
.tail8 { grid-template-rows: 19px 8px; }
.tail13 { grid-template-rows: 19px 13px; }

.r1 { margin-top: 10px; }
.r2 { margin-top: 13px; }
.r2b { margin-top: 19px; }
.r3 { margin-top: 16px; }
.r4 { margin-top: 20px; }

.x5 { margin-left: 4px; }
.x16 { margin-left: 15px; }
.x17 { margin-left: 16px; }
.x19 { margin-left: 18px; }
.x20 { margin-left: 19px; }
.x22 { margin-left: 21px; }
.x24 { margin-left: 23px; }
.x35 { margin-left: 34px; }
.x36 { margin-left: 35px; }
.x41 { margin-left: 40px; }
.x43 { margin-left: 42px; }
.x60 { margin-left: 59px; }

.s0 { background-color: #fbfbfb; }
.s1 { background-color: #f4f4f4; }
.s2 { background-color: #eeeeee; }
.s3 { background-color: #e8e8e8; }
.s4 { background-color: #e2e2e2; }
.s5 { background-color: #dcdcdc; }
.s6 { background-color: #d5d5d5; }
.s7 { background-color: #cecece; }
.s8 { background-color: #c6c6c6; }
.s9 { background-color: #bcbcbc; }
.s9w { background-color: #fff; }

/* coloured smudges the pixelation left around the icons */
.tint {
    position: absolute;
    z-index: 1;
}

.t1 { left: 90px; top: 79px; width: 28px; height: 30px; background: linear-gradient(#f8d04b 0 11px, #fdf6e0 11px); }
.t2 { left: 40px; top: 76px; width: 76px; height: 33px; background: linear-gradient(#f6c93a 0 14px, #fdf6e0 14px); }
.t3 { left: 38px; top: 90px; width: 76px; height: 19px; background-color: #fdf6e0; }
.t4 { left: 37px; top: 97px; width: 76px; height: 12px; background-color: #fdf6e0; }
.t5 { left: 34px; top: 90px; width: 76px; height: 19px; background-color: #fdf6e0; }
.t6 { left: 42px; top: 106px; width: 76px; height: 10px; background-color: #ecf7fd; }
.t7 { left: 40px; top: 102px; width: 76px; height: 15px; background-color: #ecf3fd; }
.t8 { left: 38px; top: 103px; width: 76px; height: 13px; background-color: #fde9e8; }
.t9 { left: 37px; top: 92px; width: 76px; height: 24px; background: linear-gradient(#ff7b7b 0 5px, #fee7e6 5px); }
.t10 {
    left: 35px;
    top: 89px;
    width: 76px;
    height: 27px;
    background:
        linear-gradient(#abcdfd, #abcdfd) 0 0 / 19px 8px no-repeat,
        linear-gradient(#e9f2fe, #e9f2fe) 0 8px / 100% 19px no-repeat;
}
.t11 {
    left: 34px;
    top: 73px;
    width: 76px;
    height: 43px;
    background:
        linear-gradient(#b8d4fd, #b8d4fd) 0 0 / 19px 24px no-repeat,
        linear-gradient(#4f97ff, #4f97ff) 19px 0 / 57px 24px no-repeat,
        linear-gradient(#e9f2fe, #e9f2fe) 0 24px / 100% 19px no-repeat;
}
.t12 { left: 72px; top: 85px; width: 46px; height: 15px; border-radius: 14px 0 0 0; background: linear-gradient(90deg, #c3d67b 0 27px, #cbeaa8 27px); }
.t13 { left: 21px; top: 75px; width: 113px; height: 43px; background-color: #fcfcfc; }

/* scrollbar */
.scroller {
    width: 18px;
    flex: none;
    display: flex;
    flex-direction: column;
    align-items: flex-start;
    padding-top: 7px;
    padding-bottom: 9px;
}

.arrow-up,
.arrow-down {
    width: 0;
    height: 0;
    margin-left: 0;
    border: 6px solid transparent;
    flex: none;
}

.arrow-up {
    border-top: 0;
    border-bottom: 6px solid #b9bec4;
}

.arrow-down {
    border-bottom: 0;
    border-top: 6px solid #b9bec4;
    margin-top: 8px;
}

.track {
    flex: 1;
    width: 12px;
    margin-top: 10px;
    padding-top: 152px;
    background-color: #e2e2e2;
    border-radius: 6px 6px 0 0;
}

.thumb-bar {
    height: 100%;
    background-color: #cdd0d3;
    border-radius: 6px;
}

/* bottom bar */
.status {
    height: 42px;
    flex: none;
    display: flex;
    align-items: center;
    justify-content: space-between;
    padding: 0 35px 0 22px;
    border-top: 2px solid #e3e6eb;
    color: #9a9a9a;
    line-height: 20px;
}

.status-text {
    margin-top: -4px;
}

.status-icons {
    display: flex;
    align-items: center;
    gap: 15px;
}

/* annotations */
.mark {
    position: absolute;
    z-index: 5;
    border: 7px solid #ff3a3a;
}

.mark-download {
    left: 297px;
    top: 94px;
    width: 157px;
    height: 72px;
}

.mark-file {
    left: 737px;
    top: 316px;
    width: 220px;
    height: 174px;
}
```
